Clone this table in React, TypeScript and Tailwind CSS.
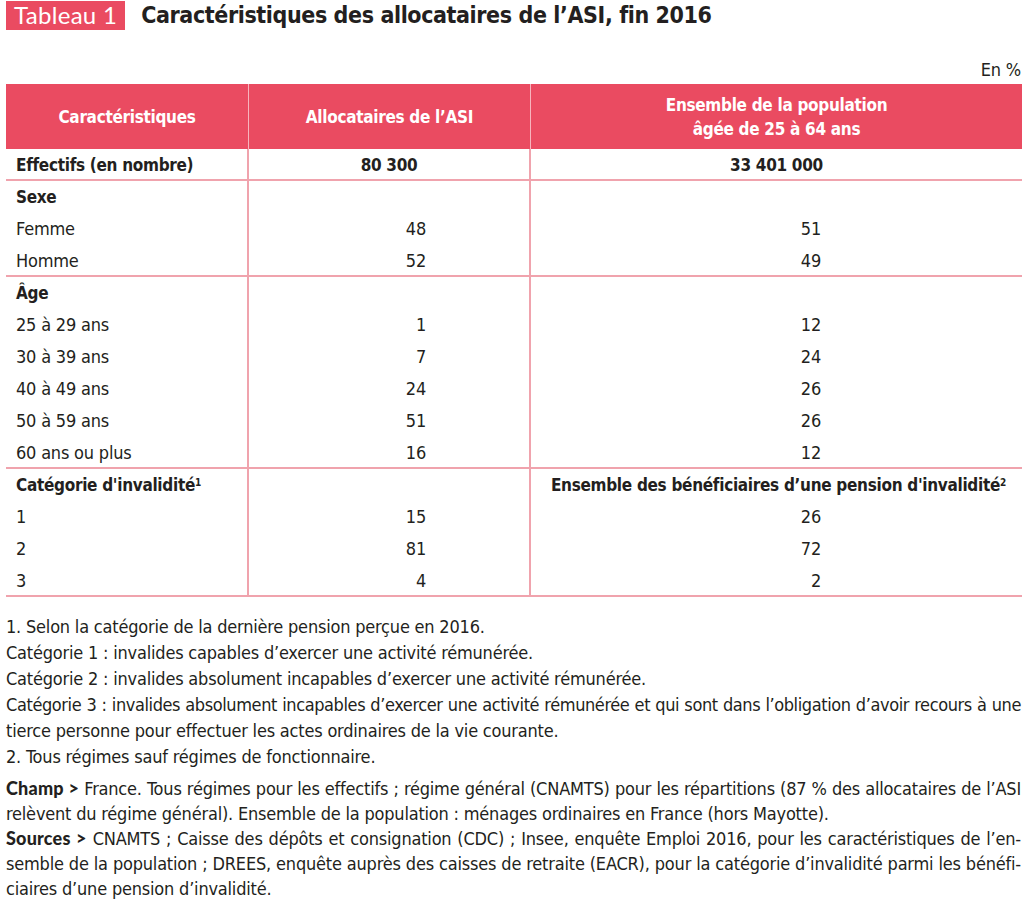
const PINK = "bg-[#ea4b61]";
const LINE = "border-[#f0a3ad]";

type Row = { label: string; a?: string; b?: string; bold?: boolean; center?: boolean; sup?: string };

const groups: Row[][] = [
  [{ label: "Effectifs (en nombre)", a: "80 300", b: "33 401 000", bold: true, center: true }],
  [
    { label: "Sexe", bold: true },
    { label: "Femme", a: "48", b: "51" },
    { label: "Homme", a: "52", b: "49" },
  ],
  [
    { label: "Âge", bold: true },
    { label: "25 à 29 ans", a: "1", b: "12" },
    { label: "30 à 39 ans", a: "7", b: "24" },
    { label: "40 à 49 ans", a: "24", b: "26" },
    { label: "50 à 59 ans", a: "51", b: "26" },
    { label: "60 ans ou plus", a: "16", b: "12" },
  ],
  [
    { label: "Catégorie d'invalidité", sup: "1", bold: true },
    { label: "1", a: "15", b: "26" },
    { label: "2", a: "81", b: "72" },
    { label: "3", a: "4", b: "2" },
  ],
];

const groupHeights = ["h-[32px]", "h-[96px]", "h-[192px]", "h-[128px]"];

const BOLD = "font-bold text-[17px] tracking-[-0.3px]";

const Cell = ({ children, className = "" }: { children?: React.ReactNode; className?: string }) => (
  <div className={`h-8 shrink-0 flex items-center whitespace-nowrap ${className}`}>{children}</div>
);

export default function App() {
  return (
    <div
      className="w-[1023px] h-[912px] bg-white text-[#231f20] overflow-hidden"
      style={{ fontFamily: "'Liberation Sans Narrow','DejaVu Sans Condensed','Roboto Condensed','Liberation Sans',sans-serif" }}
    >
      {/* Title */}
      <div className="flex items-center h-[30px] pl-[6px]">
        <span
          className={`${PINK} text-white h-[29px] px-[8px] flex items-center text-[24px] leading-none tracking-[0.3px]`}
          style={{ fontFamily: "Lato, 'Open Sans', sans-serif" }}
        >
          Tableau 1
        </span>
        <h1 className="ml-[16px] text-[23px] font-bold leading-none tracking-[-0.4px]">
          Caractéristiques des allocataires de l’ASI, fin 2016
        </h1>
      </div>

      <div className="flex justify-end pr-[2px] mt-[26px] h-[28px] text-[18px] tracking-[-0.2px] leading-none items-center">
        En %
      </div>

      {/* Table */}
      <div className="ml-[6px] w-[1016px] text-[18px] tracking-[-0.2px] leading-none">
        <div className={`${PINK} h-[65px] grid grid-cols-[243px_282px_491px] text-white leading-[24px] ${BOLD}`}>
          <div className="flex items-center justify-center border-r border-[#f7b4bd]">Caractéristiques</div>
          <div className="flex items-center justify-center border-r border-[#f7b4bd]">Allocataires de l’ASI</div>
          <div className="flex flex-col items-center justify-center text-center">
            <span>Ensemble de la population</span>
            <span>âgée de 25 à 64 ans</span>
          </div>
        </div>

        {groups.map((g, gi) => (
          <div key={gi} className={`grid grid-cols-[243px_282px_491px] border-b-2 ${LINE} ${groupHeights[gi]}`}>
            <div className={`flex flex-col border-r-2 ${LINE} pl-[10px]`}>
              {g.map((r, i) => (
                <Cell key={i} className={r.bold ? BOLD : ""}>
                  <span>
                    {r.label}
                    {r.sup && <sup className="text-[10px] font-bold">{r.sup}</sup>}
                  </span>
                </Cell>
              ))}
            </div>
            <div className={`flex flex-col border-r-2 ${LINE}`}>
              {g.map((r, i) => (
                <Cell key={i} className={r.center ? `justify-center ${BOLD}` : "justify-end pr-[103px]"}>
                  {r.a}
                </Cell>
              ))}
            </div>
            <div className="flex flex-col">
              {g.map((r, i) =>
                gi === 3 && i === 0 ? (
                  <Cell key={i} className={`justify-center pl-[4px] ${BOLD}`}>
                    <span>
                      Ensemble des bénéficiaires d’une pension d'invalidité
                      <sup className="text-[10px] font-bold">2</sup>
                    </span>
                  </Cell>
                ) : (
                  <Cell key={i} className={r.center ? `justify-center ${BOLD}` : "justify-end pr-[201px]"}>
                    {r.b}
                  </Cell>
                )
              )}
            </div>
          </div>
        ))}
      </div>

      {/* Notes */}
      <div className="ml-[6px] w-[1015px] mt-[17px] text-[18px] tracking-[-0.2px] leading-[26px]">
        <p>1. Selon la catégorie de la dernière pension perçue en 2016.</p>
        <p>Catégorie 1 : invalides capables d’exercer une activité rémunérée.</p>
        <p>Catégorie 2 : invalides absolument incapables d’exercer une activité rémunérée.</p>
        <p className="text-justify [text-align-last:justify] tracking-[-0.4px]">
          Catégorie 3 : invalides absolument incapables d’exercer une activité rémunérée et qui sont dans l’obligation d’avoir recours à une
        </p>
        <p>tierce personne pour effectuer les actes ordinaires de la vie courante.</p>
        <p>2. Tous régimes sauf régimes de fonctionnaire.</p>
        <div className="mt-[6px] leading-[25px]">
          <p className="text-justify [text-align-last:justify]">
            <b style={{ fontFamily: "Lato, sans-serif" }} className="font-black tracking-[0.2px]">Champ &gt;</b> France. Tous régimes pour les effectifs ; régime général (CNAMTS) pour les répartitions (87 % des allocataires de l’ASI
          </p>
          <p>relèvent du régime général). Ensemble de la population : ménages ordinaires en France (hors Mayotte).</p>
          <p className="text-justify [text-align-last:justify]">
            <b style={{ fontFamily: "Lato, sans-serif" }} className="font-black tracking-[0.2px]">Sources &gt;</b> CNAMTS ; Caisse des dépôts et consignation (CDC) ; Insee, enquête Emploi 2016, pour les caractéristiques de l’en-
          </p>
          <p className="text-justify [text-align-last:justify]">
            semble de la population ; DREES, enquête auprès des caisses de retraite (EACR), pour la catégorie d’invalidité parmi les bénéfi-
          </p>
          <p>ciaires d’une pension d’invalidité.</p>
        </div>
      </div>
    </div>
  );
}
